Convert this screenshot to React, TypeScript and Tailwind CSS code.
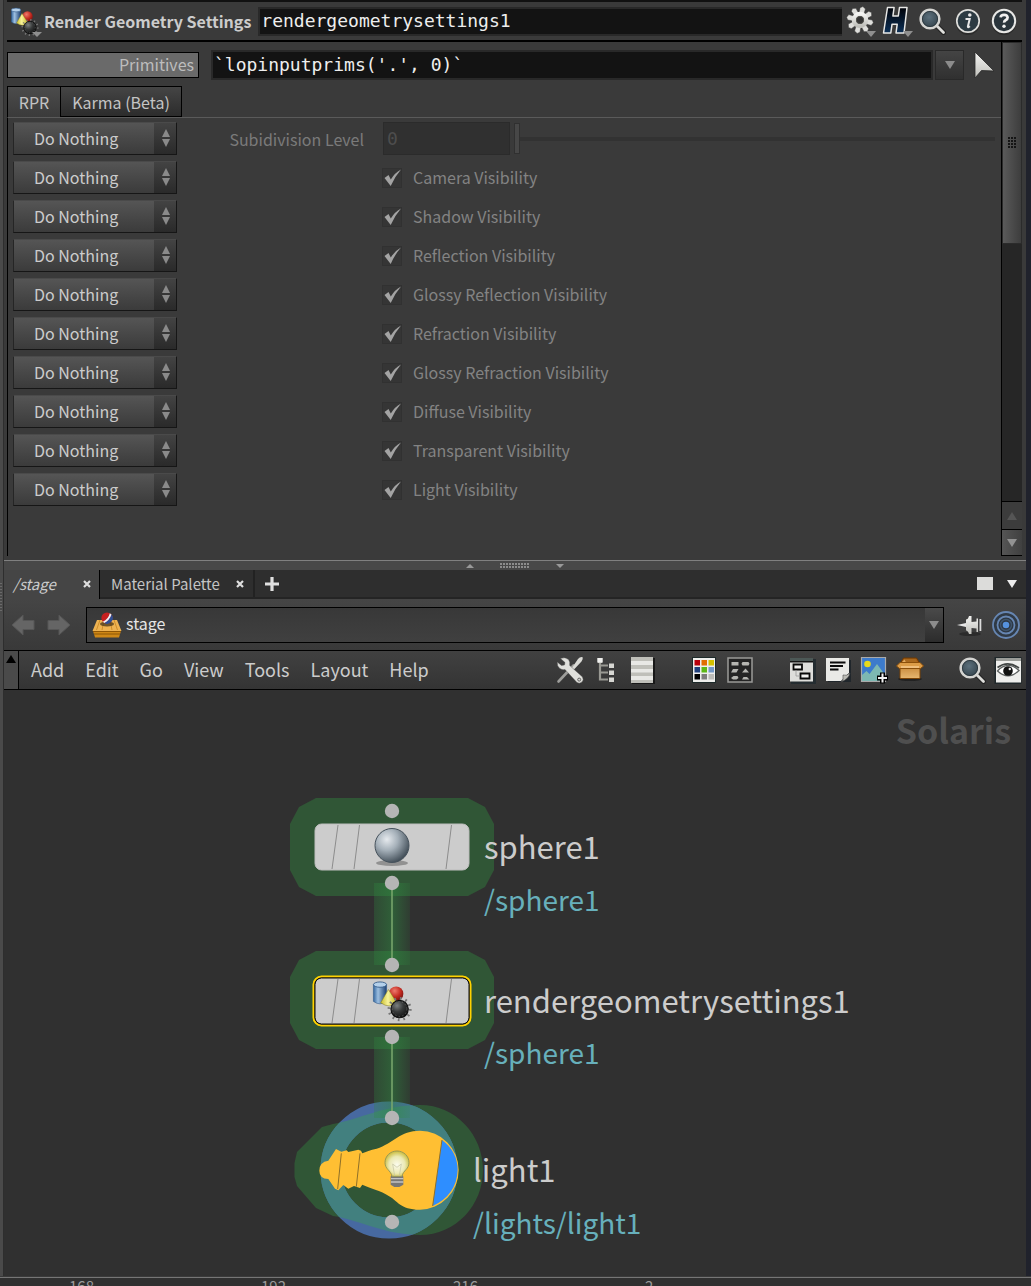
import React, { useState } from "react";

type IconProps = { className?: string };

const sans = "font-['Noto_Sans_CJK_SC','Noto_Sans',sans-serif]";
const mono = "font-['DejaVu_Sans_Mono',monospace]";

function Defs() {
  return (
    <svg width="0" height="0" className="absolute" aria-hidden="true">
      <defs>
        <linearGradient id="blueCyl" x1="0" x2="1" y1="0" y2="0">
          <stop offset="0" stopColor="#33669f" />
          <stop offset="0.35" stopColor="#9dbfe0" />
          <stop offset="1" stopColor="#1c3f70" />
        </linearGradient>
        <radialGradient id="redBall" cx="0.4" cy="0.3" r="0.7">
          <stop offset="0" stopColor="#ee7a6c" />
          <stop offset="0.6" stopColor="#c32a20" />
          <stop offset="1" stopColor="#7d1410" />
        </radialGradient>
        <linearGradient id="yellowCone" x1="0" x2="1" y1="0" y2="0">
          <stop offset="0" stopColor="#c9bd2c" />
          <stop offset="0.45" stopColor="#f8f39a" />
          <stop offset="1" stopColor="#c4b21d" />
        </linearGradient>
        <radialGradient id="darkBall" cx="0.35" cy="0.3" r="0.7">
          <stop offset="0" stopColor="#7c8080" />
          <stop offset="0.5" stopColor="#383a3a" />
          <stop offset="1" stopColor="#151515" />
        </radialGradient>
        <radialGradient id="glass" cx="0.45" cy="0.4" r="0.6">
          <stop offset="0" stopColor="#5c707c" />
          <stop offset="1" stopColor="#33424b" />
        </radialGradient>
        <linearGradient id="navyH" x1="0" x2="0" y1="0" y2="1">
          <stop offset="0" stopColor="#000208" />
          <stop offset="1" stopColor="#0d3158" />
        </linearGradient>
        <linearGradient id="silver" x1="0" x2="0" y1="0" y2="1">
          <stop offset="0" stopColor="#f4f4f2" />
          <stop offset="1" stopColor="#bfbfba" />
        </linearGradient>
        <linearGradient id="wood" x1="0" x2="0" y1="0" y2="1">
          <stop offset="0" stopColor="#c98b3c" />
          <stop offset="1" stopColor="#e7b771" />
        </linearGradient>
        <radialGradient id="steel" cx="0.35" cy="0.32" r="0.72">
          <stop offset="0" stopColor="#e6eaee" />
          <stop offset="0.45" stopColor="#a5b0b9" />
          <stop offset="1" stopColor="#414d57" />
        </radialGradient>
        <linearGradient id="wire" x1="0" x2="1" y1="0" y2="0">
          <stop offset="0" stopColor="#2f8a40" stopOpacity="0.28" />
          <stop offset="0.5" stopColor="#2f8a40" stopOpacity="0.52" />
          <stop offset="1" stopColor="#2f8a40" stopOpacity="0.14" />
        </linearGradient>
        <radialGradient id="bulbGlass" cx="0.5" cy="0.55" r="0.55">
          <stop offset="0" stopColor="#fbfbee" />
          <stop offset="0.6" stopColor="#ebe9b4" />
          <stop offset="1" stopColor="#c9bb3a" />
        </radialGradient>
        <clipPath id="lightHaloClip">
          <path d={lightHalo} />
        </clipPath>
      </defs>
    </svg>
  );
}

const lightHalo =
  "M294.500 1163 297 1152 322 1127 333 1124C360 1119 385 1105 420 1105C456 1105 483 1135 483 1170S456 1235 420 1235C385 1235 360 1220 333 1216L316 1208 297 1186 294.500 1177z";

function GeometryShapes() {
  return (
    <g>
      <path d="M.3 4v12q4.700 3.500 9.400 0V4z" fill="url(#blueCyl)" stroke="#2d5686" strokeWidth="0.400" />
      <ellipse cx="5" cy="4" rx="4.700" ry="1.900" fill="#b4d0ea" stroke="#2d5686" strokeWidth="0.600" />
      <circle cx="16.500" cy="10.500" r="5.200" fill="url(#redBall)" />
      <path d="M11 7.500 17 17q-5 4.500-11.500 0z" fill="url(#yellowCone)" stroke="#8b8120" strokeWidth="0.400" />
      <circle cx="19" cy="21.500" r="7.600" fill="none" stroke="#777" strokeWidth="2" strokeDasharray="1.200 2.780" />
      <circle cx="19" cy="21.500" r="6.200" fill="url(#darkBall)" stroke="#0e0e0e" strokeWidth="0.800" />
      <circle cx="19" cy="21.500" r="5.200" fill="none" stroke="#707070" strokeWidth="0.500" strokeDasharray="1 1.600" />
    </g>
  );
}

function GeometryIcon({ className }: IconProps) {
  return (
    <svg viewBox="0 0 32 32" width="32" height="32" className={className}>
      <g transform="translate(0 1)"><GeometryShapes /></g>
      <path d="M21 27h10l-5 5z" fill="#8f8f8f" />
    </svg>
  );
}

function GearIcon() {
  const teeth = [0, 45, 90, 135, 180, 225, 270, 315];
  return (
    <svg viewBox="0 0 32 32" width="32" height="32">
      {teeth.map((a) => (
        <path key={a} d="M11.700 9 11.500 3 14 1.300 17 3 16.500 9z" transform={`rotate(${a + 12} 14 15)`} fill="#dededb" stroke="#2c2c2c" strokeWidth="0.400" />
      ))}
      <circle cx="14" cy="15" r="6" fill="none" stroke="url(#silver)" strokeWidth="4.600" />
      <circle cx="14" cy="15" r="3.700" fill="#333" stroke="#55554f" strokeWidth="0.800" />
      <path d="M20 26h10l-5 6z" fill="#8f8f8f" />
    </svg>
  );
}

function HoudiniIcon() {
  return (
    <svg viewBox="0 0 32 32" width="32" height="32">
      <path
        d="M5.500 2.500h6.600L10.900 11h5.400L17.500 2.500H25L22 28h-8l1.200-8.700H10L8.800 28H1.500z"
        fill="url(#navyH)"
        stroke="#e8e8e6"
        strokeWidth="1.500"
        strokeLinejoin="round"
      />
      <path d="M21 26h10l-5 6z" fill="#8f8f8f" />
    </svg>
  );
}

function SearchIcon() {
  return (
    <svg viewBox="0 0 28 28" width="28" height="28">
      <path d="m17.500 17.500 8 8" stroke="#222" strokeWidth="5" strokeLinecap="round" />
      <path d="m17.500 17.500 8 8" stroke="#dededb" strokeWidth="2.800" strokeLinecap="round" />
      <circle cx="12" cy="12" r="9.300" fill="url(#glass)" stroke="#d5d5d2" strokeWidth="2.600" />
      <circle cx="12" cy="12" r="7.600" fill="none" stroke="#28343a" strokeWidth="0.800" />
    </svg>
  );
}

function InfoIcon() {
  return (
    <svg viewBox="0 0 28 28" width="28" height="28">
      <ellipse cx="14" cy="16" rx="12" ry="12" fill="#222" opacity="0.600" />
      <circle cx="14" cy="14" r="11.200" fill="#2c3a42" stroke="#dededb" strokeWidth="1.700" />
      <path d="M11.500 12h4.200l-1.800 7.500q-.2 1.500 2-.3" fill="none" stroke="#e8e8e8" strokeWidth="2" />
      <circle cx="15.800" cy="8" r="1.800" fill="#e8e8e8" />
    </svg>
  );
}

function HelpIcon() {
  return (
    <svg viewBox="0 0 28 28" width="28" height="28">
      <ellipse cx="14" cy="16" rx="12" ry="12" fill="#222" opacity="0.600" />
      <circle cx="14" cy="14" r="11.200" fill="#2a353c" stroke="#e8e8e6" strokeWidth="2" />
      <path d="M10.600 10.300q.3-2.500 3.500-2.500t3.500 2.600q0 1.600-1.800 2.600t-1.700 2.600" fill="none" stroke="#f0f0f0" strokeWidth="2.700" />
      <circle cx="14" cy="19.300" r="1.700" fill="#f0f0f0" />
    </svg>
  );
}

function StageIcon() {
  return (
    <svg viewBox="0 0 30 26" width="30" height="26">
      <path d="M5 8h20l4.500 11h-29z" fill="#eeb352" />
      <path d="M8 8 4.500 18M12 8l-2 10M18 8l2 10M22 8l3.500 10" stroke="#c98925" strokeWidth="0.900" />
      <path d="M1 19h28l-2 6.500H3z" fill="#cf8816" />
      <path d="M1 19.500h28M2 22h26" stroke="#8e5605" strokeWidth="1" />
      <ellipse cx="15" cy="12" rx="7" ry="2.500" fill="#3b2c15" opacity="0.700" />
      <circle cx="15" cy="6" r="5.600" fill="#c62020" />
      <path d="M19.500 2.600A5.600 5.600 0 0 1 12.200 10.900Q17.500 8.500 19.500 2.600z" fill="#2d4f93" />
      <path d="M17.800 1.200 19.500 2.600Q17.500 8.500 12.200 10.900L10.800 9.700Q16.500 7 17.800 1.200z" fill="#eef1f6" />
    </svg>
  );
}

function ArrowIcon({ flip = false }: { flip?: boolean }) {
  return (
    <svg viewBox="0 0 28 28" width="28" height="28" className={flip ? "-scale-x-100" : ""}>
      <path d="M2 14 13 4v5.500h11v9H13V24z" fill="#656565" stroke="#565656" />
    </svg>
  );
}

function PinIcon() {
  return (
    <svg viewBox="0 0 28 24" width="28" height="24">
      <ellipse cx="14" cy="21" rx="11" ry="2" fill="#2b2b2b" />
      <path d="M1 12 10 10v4z" fill="#e6e6e6" />
      <path d="M10 6.500q2 0 3-3.500h2.500v6l5-.5V5.500H22V19h-1.500v-3.500l-5-.5v6H13Q12 17.500 10 17.500z" fill="url(#silver)" />
      <path d="M23.500 6h1.800v12h-1.800z" fill="#dcdcdc" />
    </svg>
  );
}

function TargetIcon() {
  return (
    <svg viewBox="0 0 30 30" width="30" height="30">
      <circle cx="15" cy="15" r="13" fill="#303a45" stroke="#6686b2" strokeWidth="1.800" />
      <circle cx="15" cy="15" r="8.500" fill="#2d3742" stroke="#6686b2" strokeWidth="1.800" />
      <circle cx="15" cy="15" r="5.500" fill="none" stroke="#3f556d" strokeWidth="1.500" />
      <circle cx="15" cy="15" r="3.300" fill="#5592de" />
    </svg>
  );
}

function ToolsIcon() {
  return (
    <svg viewBox="0 0 28 28" width="28" height="28">
      <path d="m2.500 25.500 15-16" stroke="#9d9d9a" strokeWidth="2.600" strokeLinecap="round" />
      <path d="M15.500 12.500 22 3q2-2.500 4.500-2 1 2.500-1 4.500L17.500 14z" fill="#dadad6" />
      <path d="M4.500 2.500 9 6.500 8.500 9 5.500 9.500 1.200 6Q1 10 3.500 12.300q2.500 2 5.500 1.200l12 13q2.800 1.500 5-.5 2-2.500.5-5l-12.800-11.500Q14.500 6 12.500 3.500 9 .5 4.500 2.500z" fill="#e0e0dc" stroke="#4b4b4b" strokeWidth="0.400" />
      <circle cx="23.200" cy="23.600" r="1.500" fill="#d6d6d3" stroke="#555" strokeWidth="0.900" />
    </svg>
  );
}

function TreeIcon() {
  return (
    <svg viewBox="0 0 28 28" width="28" height="28">
      <path d="M8 6v17.500h8M8 9.500h8M8 16.500h8" fill="none" stroke="#999993" strokeWidth="2.200" />
      <path d="M5.500 2h5v5h-5zM17 7.500h5v4.500h-5zM17 14.500h5V19h-5zM17 21.500h5V26h-5z" fill="#d6d6d2" />
      <path d="M5.500 2h5v4h-5z" fill="#f0f0ee" />
    </svg>
  );
}

function ListIcon() {
  return (
    <svg viewBox="0 0 28 28" width="28" height="28">
      <path d="M4 2h23v26H4z" fill="#181818" />
      <path d="M3 1h22v26H3z" fill="#bfbfb9" />
      <path d="M3 5h22v4H3zM3 13h22v3.500H3zM3 20h22v4H3z" fill="#e8e8e5" />
    </svg>
  );
}

function PaletteIcon() {
  const colors = ["#b8000c", "#e06e00", "#d3c100", "#1f3f7c", "#5db814", "#7398c6", "#000000", "#7e7e7c", "#bcbcb8"];
  return (
    <svg viewBox="0 0 28 28" width="28" height="28">
      <path d="M2 1h24v26H2z" fill="#1d2a2a" />
      <path d="M3 2h22v24H3z" fill="#eeeeec" />
      {colors.map((c, i) => (
        <rect key={c} x={4.5 + (i % 3) * 7} y={4 + Math.floor(i / 3) * 7} width="5.500" height="5.500" fill={c} />
      ))}
    </svg>
  );
}

function ShapesIcon() {
  return (
    <svg viewBox="0 0 28 28" width="28" height="28">
      <path d="M2 2h24v24H2z" fill="#242424" stroke="#9a9a98" strokeWidth="1.500" />
      <path d="M5.500 6h7v3.500h-7zM16.500 6h6l1 1.800-1 1.700h-6l-1-1.700zM7 13h5.500l-2 3.500H5zM16 16.500l3.500-4 3.500 4zM7.500 20h4l1 2-2 1.500H7L5 22zM16 23.500l1.500-2.500h3.500l2.500 2.500z" fill="#b5b5b1" />
    </svg>
  );
}

function PanesIcon() {
  return (
    <svg viewBox="0 0 28 28" width="28" height="28">
      <path d="M3 3h25v25H3z" fill="#242c30" />
      <path d="M2 2h23v23.500H2z" fill="#dededb" />
      <path d="M2 2h23v3H2z" fill="#4c5856" />
      <path d="M2 5h23v1.500H2z" fill="#141414" />
      <path d="M5.500 8.500H14v5H5.500zM12.500 17.500h9v5h-9z" fill="#f0f0ee" stroke="#080808" strokeWidth="1.800" />
      <path d="M8 14v6h4" fill="none" stroke="#999" strokeWidth="0.800" />
    </svg>
  );
}

function NoteIcon() {
  return (
    <svg viewBox="0 0 28 28" width="28" height="28">
      <path d="M4 4h23v22H4z" fill="#20262b" />
      <path d="M2 2h23v15l-8 8H2z" fill="#e9e9e6" />
      <path d="M17 26q3-2 2-7 3 1.500 7-2-1 6-9 9z" fill="#b9b9b3" stroke="#454545" strokeWidth="0.600" />
      <path d="M6 6.500h15.500M6 10h13M6 13.500h8.500" stroke="#0b0b0b" strokeWidth="1.800" />
    </svg>
  );
}

function ImageIcon() {
  return (
    <svg viewBox="0 0 28 28" width="28" height="28">
      <path d="M1.500 1.500h24v24h-24z" fill="#3d7bcb" stroke="#aaaaaa" strokeWidth="1.200" />
      <circle cx="7.500" cy="8" r="3.300" fill="#e8d919" />
      <path d="M2 19l4.500-4 3 3L17 8l8 11v6H2z" fill="#7db8b2" />
      <path d="M22.500 16.500v11M17 22h11" stroke="#000" strokeWidth="5" />
      <path d="M22.500 17.500v9M18 22h9" stroke="#f2f2f2" strokeWidth="2" />
    </svg>
  );
}

function BoxIcon() {
  return (
    <svg viewBox="0 0 28 28" width="28" height="28">
      <ellipse cx="14" cy="23" rx="12" ry="2" fill="#222" />
      <path d="M4 11h20v11.500H4z" fill="url(#wood)" stroke="#7b4305" />
      <path d="M7.500 2h13l4 6.500h-21z" fill="#a85e12" stroke="#6d3a05" />
      <path d="M8.500 3h11l2 3.500h-15z" fill="#a9691f" />
      <path d="M10 6.500 8.500 3.500 6 6z" fill="#e0aa60" />
      <path d="M4 6.500h20l3.500 3.500-3 2.500h-21L.5 10z" fill="#dd9d48" stroke="#8b4f0a" />
      <path d="M5 10h18v2H5z" fill="#efbe7c" />
    </svg>
  );
}

function EyeIcon() {
  return (
    <svg viewBox="0 0 28 28" width="28" height="28">
      <path d="M.5 1h27v27H.5z" fill="#20282b" />
      <path d="M2 2h25v24.500H2z" fill="#eeeeec" />
      <path d="M2 2h25v3H2z" fill="#9a9c98" />
      <path d="M3.500 15q10-11 21.500-.5Q14.500 25 3.500 15z" fill="#fff" stroke="#5d6160" strokeWidth="1.300" />
      <path d="M3.500 11.500Q14 4 25 12" fill="none" stroke="#404443" strokeWidth="1.600" />
      <circle cx="14" cy="15" r="4.800" fill="#111" />
      <circle cx="15.800" cy="13" r="1.200" fill="#eee" />
    </svg>
  );
}

function TriangleDown({ className }: IconProps) {
  return (
    <svg viewBox="0 0 10 8" width="10" height="8" className={className}>
      <path d="M0 0h10L5 8z" fill="currentColor" />
    </svg>
  );
}

const iconButton = "flex shrink-0 items-center justify-center";

function Header() {
  return (
    <header className="flex h-[40px] items-center border-t-2 border-[#111] pr-1 pl-1">
      <button aria-label="Node type" className={iconButton}>
        <GeometryIcon />
      </button>
      <label htmlFor="node-name" className="ml-px shrink-0 text-base leading-6 font-bold text-[#cccccc]">
        Render Geometry Settings
      </label>
      <input
        id="node-name"
        defaultValue="rendergeometrysettings1"
        className={`${mono} ml-[7px] h-[29px] min-w-0 flex-1 border-2 border-r-0 border-[#292929] bg-[#131313] pb-0.5 pl-px text-lg leading-6 text-[#eeeeee] outline-none`}
      />
      <div className="ml-1 flex shrink-0 items-center gap-1">
        <button aria-label="Settings" className={iconButton}><GearIcon /></button>
        <button aria-label="Houdini" className={iconButton}><HoudiniIcon /></button>
        <div className="flex gap-2">
          <button aria-label="Search parameters" className={iconButton}><SearchIcon /></button>
          <button aria-label="Info" className={iconButton}><InfoIcon /></button>
          <button aria-label="Help" className={iconButton}><HelpIcon /></button>
        </div>
      </div>
    </header>
  );
}

function PrimitivesRow() {
  return (
    <div className="flex h-[30px] items-center">
      <label htmlFor="primitives" className="flex h-[26px] w-[192px] shrink-0 items-center justify-end border border-black bg-[#6a6a6a] pr-1 pb-0.5 text-base text-[#bdbdbd]">
        Primitives
      </label>
      <input
        id="primitives"
        defaultValue="`lopinputprims('.', 0)`"
        className={`${mono} ml-3 h-[30px] min-w-0 flex-1 border-2 border-[#292929] bg-[#131313] pb-0.5 pl-px text-lg leading-6 text-[#eeeeee] outline-none`}
      />
      <button aria-label="Primitive patterns" className="ml-0.5 flex h-[30px] w-[29px] items-center justify-center border border-[#292929] bg-linear-to-b from-[#444] to-[#303030] text-[#8c8c8c]">
        <TriangleDown />
      </button>
      <button aria-label="Select primitives" className="mr-1.5 ml-2.5">
        <svg viewBox="0 0 21 28" width="21" height="28">
          <path d="M1 1v26l6.500-7.500L20 20z" fill="url(#silver)" stroke="#282828" strokeWidth="0.800" />
        </svg>
      </button>
    </div>
  );
}

function ActionSelect({ name }: { name: string }) {
  return (
    <div className="relative h-[33px] w-[164px] shrink-0">
      <select
        aria-label={`${name} action`}
        className="h-full w-full appearance-none border border-t-[#4a4a4a] border-r-[#161616] border-b-[#161616] border-l-[#252525] bg-linear-to-b from-[#555] to-[#3b3b3b] pb-0.5 pl-5 text-base leading-6 text-[#cccccc] outline-none"
      >
        <option>Do Nothing</option>
        <option>Set or Create</option>
      </select>
      <span className="pointer-events-none absolute inset-y-px right-px flex w-[22px] items-center justify-center bg-linear-to-b from-[#434343] to-[#2a2a2a] pb-px pl-0.5">
        <svg viewBox="0 0 10 18" width="10" height="18">
          <path d="M1 8h8L5 0zM1 10h8l-4 8z" fill="#8a8a8a" />
        </svg>
      </span>
    </div>
  );
}

const toggles = [
  "Camera Visibility",
  "Shadow Visibility",
  "Reflection Visibility",
  "Glossy Reflection Visibility",
  "Refraction Visibility",
  "Glossy Refraction Visibility",
  "Diffuse Visibility",
  "Transparent Visibility",
  "Light Visibility",
];

function ToggleRow({ name }: { name: string }) {
  return (
    <div className="flex items-center">
      <ActionSelect name={name} />
      <label className="ml-[205px] flex items-center gap-[11px] text-base leading-6 text-[#838383]">
        <span className="relative flex size-5">
          <input type="checkbox" defaultChecked disabled className="peer size-5 appearance-none border border-[#313131] bg-[#353535]" />
          <svg viewBox="0 0 20 20" width="20" height="20" className="pointer-events-none absolute inset-0 hidden peer-checked:block">
            <path d="M2.500 10 6.500 7 8.800 11.500Q12.500 5 19 1.500 12.500 9 8.700 18z" fill="#a3a3a3" />
          </svg>
        </span>
        <span className="pb-0.5">{name}</span>
      </label>
    </div>
  );
}

function ParameterPanel() {
  return (
    <section className="flex border-t-2 border-black">
      <div className="flex min-w-0 flex-1 flex-col pt-2">
        <PrimitivesRow />
        <div className="mt-1.5 flex" role="tablist">
          <button role="tab" aria-selected="true" className="h-[31px] w-[54px] border border-b-0 border-black bg-linear-to-b from-[#4c4c4c] to-[#3a3a3a] text-base text-[#c4c4c4]">
            RPR
          </button>
          <button role="tab" aria-selected="false" className="h-[31px] w-[121px] border border-l-0 border-black bg-linear-to-b from-[#454545] to-[#2c2c2c] text-base text-[#c4c4c4]">
            Karma (Beta)
          </button>
        </div>
        <div className="flex h-[439px] flex-col gap-1.5 border-t border-l border-t-[#5a5a5a] border-l-black pt-1 pl-[5px]">
          <div className="flex items-center">
            <ActionSelect name="Subidivision Level" />
            <label htmlFor="subdivision" className="w-[187px] shrink-0 text-right text-base leading-6 text-[#7a7a7a]">
              Subidivision Level
            </label>
            <input id="subdivision" defaultValue="0" disabled className={`${mono} ml-[19px] h-[33px] w-[127px] border border-[#2b2b2b] bg-[#303030] pl-[3px] text-lg text-[#4d4d4d]`} />
            <input
              type="range"
              aria-label="Subidivision Level slider"
              min="0"
              max="7"
              defaultValue="0"
              disabled
              className="mr-1.5 ml-1 h-[33px] min-w-0 flex-1 appearance-none bg-transparent bg-[linear-gradient(#323232,#323232)] bg-size-[100%_4px] bg-center bg-no-repeat [&::-webkit-slider-thumb]:h-[31px] [&::-webkit-slider-thumb]:w-1.5 [&::-webkit-slider-thumb]:appearance-none [&::-webkit-slider-thumb]:border [&::-webkit-slider-thumb]:border-[#303030] [&::-webkit-slider-thumb]:bg-[#474747]"
            />
          </div>
          {toggles.map((t) => (
            <ToggleRow key={t} name={t} />
          ))}
        </div>
      </div>
      <div className="flex w-[21px] flex-col border-b border-l border-black bg-[#262626]">
        <div className="flex h-[202px] items-center justify-center border border-[#2b2b2b] bg-linear-to-r from-[#5a5a5a] to-[#3d3d3d]">
          <svg viewBox="0 0 9 12" width="9" height="12">
            <path d="M1 0v12M4 0v12M7 0v12" stroke="#151515" strokeWidth="2" strokeDasharray="2 1" />
          </svg>
        </div>
        <div className="flex-1" />
        <button aria-label="Scroll up" className="flex h-[28px] items-center justify-center border-t border-black bg-[#3c3c3c] text-[#555]">
          <TriangleDown className="rotate-180" />
        </button>
        <button aria-label="Scroll down" className="flex h-[26px] items-center justify-center border-t border-black bg-linear-to-r from-[#555] to-[#404040] text-[#929292]">
          <TriangleDown />
        </button>
      </div>
    </section>
  );
}

function Splitter() {
  return (
    <div className="mt-1 flex h-[10px] items-center justify-center gap-[26px] border-t border-[#808080] bg-[#484848]">
      <svg viewBox="0 0 8 4" width="8" height="4"><path d="M0 4h8L4 0z" fill="#999" /></svg>
      <svg viewBox="0 0 30 6" width="30" height="6">
        <path d="M0 1h30M0 4h30" stroke="#8c8c8c" strokeWidth="2" strokeDasharray="2 1" />
      </svg>
      <svg viewBox="0 0 8 4" width="8" height="4"><path d="M0 0h8L4 4z" fill="#999" /></svg>
    </div>
  );
}

function CloseGlyph() {
  return (
    <svg viewBox="0 0 8 8" width="8" height="8">
      <path d="m1 1 6 6M7 1 1 7" stroke="#dedede" strokeWidth="2.200" />
    </svg>
  );
}

function PaneTabs() {
  return (
    <div className="flex h-[29px] items-center border-b-2 border-[#242424] bg-[#2e2e2e]">
      <div className="-mb-0.5 flex h-[29px] w-[96px] items-center justify-between border-r border-black bg-[#454545] pr-2 pb-0.5 pl-[9px]">
        <button className="text-[15px] leading-5 text-[#cccccc] italic">/stage</button>
        <button aria-label="Close /stage"><CloseGlyph /></button>
      </div>
      <div className="flex h-full w-[155px] items-center justify-between border-r-2 border-[#222] pr-[9px] pl-[11px]">
        <button className="text-[15px] leading-5 whitespace-nowrap text-[#c4c4c4]">Material Palette</button>
        <button aria-label="Close Material Palette"><CloseGlyph /></button>
      </div>
      <button aria-label="New tab" className="ml-[9px]">
        <svg viewBox="0 0 16 16" width="16" height="16"><path d="M8 1v14M1 8h14" stroke="#e0e0e0" strokeWidth="3.200" /></svg>
      </button>
      <div className="flex-1" />
      <button aria-label="Maximize pane" className="h-[13px] w-4 bg-[#dcdcda]" />
      <button aria-label="Pane menu" className="mr-[9px] ml-3.5 text-[#ececec]"><TriangleDown /></button>
    </div>
  );
}

function PathBar() {
  return (
    <div className="flex h-[51px] items-center bg-linear-to-b from-[#454545] to-[#393939] pl-1.5">
      <button aria-label="Back"><ArrowIcon /></button>
      <button aria-label="Forward" className="ml-1.5"><ArrowIcon flip /></button>
      <div className="ml-3.5 flex h-[36px] min-w-0 flex-1 items-center border border-black bg-linear-to-b from-[#383838] to-[#404040] pl-[5px]">
        <StageIcon />
        <input aria-label="Network path" defaultValue="stage" className="ml-1 min-w-0 flex-1 bg-transparent pb-1 text-base leading-6 text-[#e6e6e6] outline-none" />
        <button aria-label="Path history" className="flex h-full w-[18px] items-center justify-center bg-linear-to-b from-[#4a4a4a] to-[#2c2c2c] text-[#8c8c8c]">
          <TriangleDown />
        </button>
      </div>
      <button aria-label="Pin" className="ml-3"><PinIcon /></button>
      <button aria-label="Follow selection" className="mr-[5px] ml-[7px]"><TargetIcon /></button>
    </div>
  );
}

function NetworkMenu() {
  const menus = ["Add", "Edit", "Go", "View", "Tools", "Layout", "Help"];
  const groups = [
    [["Tools", ToolsIcon], ["Tree view", TreeIcon], ["List view", ListIcon]],
    [["Color palette", PaletteIcon], ["Shape palette", ShapesIcon]],
    [["Network box", PanesIcon], ["Sticky note", NoteIcon], ["Background image", ImageIcon], ["Assets", BoxIcon]],
    [["Find", SearchIcon], ["Display options", EyeIcon]],
  ] as [string, () => React.JSX.Element][][];
  return (
    <div className="flex h-[40px] items-center border-y border-black bg-linear-to-b from-[#414141] to-[#343434]">
      <button aria-label="Collapse" className="flex h-full w-[15px] justify-center border-r border-black bg-[#4a4a4a] pt-1 text-black">
        <TriangleDown className="rotate-180" />
      </button>
      <nav className="ml-3 flex gap-[21px] pb-0.5 text-lg leading-6 text-[#cccccc]">
        {menus.map((m) => (
          <button key={m}>{m}</button>
        ))}
      </nav>
      <div className="flex-1" />
      <div className="flex gap-[34px] pr-1">
        {groups.map((g) => (
          <div key={g[0][0]} className="flex gap-2">
            {g.map(([name, Icon]) => (
              <button key={name} aria-label={name} className={iconButton}><Icon /></button>
            ))}
          </div>
        ))}
      </div>
    </div>
  );
}

function NodeBody({ y, selected = false }: { y: number; selected?: boolean }) {
  return (
    <g>
      {selected && <rect x="313.500" y={y - 1.5} width="157" height="49" rx="8" fill="#111" stroke="#ffd200" strokeWidth="2" />}
      <rect x="315" y={y} width="154" height="46" rx="6.500" fill="#cccccc" stroke={selected ? "#0c0c0c" : "#bdbdbd"} />
      <path d={`M338 ${y + 1}l-6 44M359.500 ${y + 1}l-5.500 44M451.500 ${y + 1}l-5.500 44`} stroke="#8c8c8c" fill="none" />
    </g>
  );
}

const halo = "M316 0H468L485 9 494 26V72L485 89 468 98H316L299 89 290 72V26L299 9z";

const nodeLabel = "absolute whitespace-nowrap text-[31px] leading-10 text-[#cccccc]";
const pathLabel = "absolute whitespace-nowrap text-[28px] leading-10 text-[#67b0bc]";

function NetworkCanvas() {
  const connectors = [811, 883, 965, 1037, 1118, 1222];
  return (
    <main className="relative min-h-[586px] flex-1 overflow-hidden bg-[#303030]">
      <svg viewBox="4 690 680 586" width="680" height="586" className="absolute top-0 left-0">
        <path d={halo} transform="translate(0 798)" fill="#305636" />
        <path d={halo} transform="translate(0 951)" fill="#305636" />
        <path d={lightHalo} fill="#305636" />
        <circle cx="389" cy="1170" r="58" fill="none" stroke="#4769a0" strokeWidth="21" />
        <circle cx="389" cy="1170" r="58" fill="none" stroke="#42807f" strokeWidth="21" clipPath="url(#lightHaloClip)" />
        <path d="M374 883h36v82h-36zM374 1037h36v81h-36z" fill="url(#wire)" />
        <path d="M392 883v82M392 1037v81" stroke="#7ba86d" strokeWidth="1.500" />
        <NodeBody y={824} />
        <ellipse cx="392" cy="863" rx="16" ry="3" fill="#777" opacity="0.700" />
        <circle cx="392" cy="845.500" r="17" fill="url(#steel)" stroke="#46525c" />
        <NodeBody y={978} selected />
        <g transform="translate(373 979) scale(1.400)"><GeometryShapes /></g>
        <g transform="translate(280 1080) scale(.3333)">
          <path
            d="M118 272Q118 246 145 242L168 207 184 215 200 211 205 216 235 209 243 212 247 220Q262 212 290 206C340 190 360 152 420 152A118 118 0 0 1 536 270 118 118 0 0 1 420 389C360 389 350 360 330 350 300 330 270 325 247 314L240 324 222 318 205 326 190 315 175 331 165 326 145 297Q118 296 118 272Z"
            fill="#ffbf33"
          />
          <path d="M486 180Q533 215 533 270 530 345 458 378Z" fill="#2e8eff" />
          <path d="M184 220 173 327M240 220 229 320M486 180 458 378" stroke="#8f6f28" strokeWidth="3" />
          <path d="M337 280h29l4 10v24l-12 7h-15l-11-7v-24z" fill="#767676" />
          <path d="M333 296h37M333 306h37" stroke="#c2c2c2" strokeWidth="4" />
          <path d="M351 213C331 213 315 228 315 248 315 268 332 270 336 289H366C370 270 387 268 387 248 387 228 371 213 351 213Z" fill="url(#bulbGlass)" stroke="#9a9a55" strokeWidth="3" />
          <path d="M344 288l-6-36 13 10 13-10-6 36" fill="none" stroke="#c3c3a0" strokeWidth="2" />
        </g>
        {connectors.map((y) => (
          <circle key={y} cx="392" cy={y} r="7.200" fill="#b5b5b5" />
        ))}
      </svg>
      <span className="absolute top-[18px] right-[15px] text-[34px] leading-11 font-bold text-[#4f4f4f]">Solaris</span>
      <span className={`${nodeLabel} top-[136px] left-[480px]`}>sphere1</span>
      <span className={`${pathLabel} top-[189px] left-[480px]`}>/sphere1</span>
      <span className={`${nodeLabel} top-[290px] left-[480px]`}>rendergeometrysettings1</span>
      <span className={`${pathLabel} top-[342px] left-[480px]`}>/sphere1</span>
      <span className={`${nodeLabel} top-[459px] left-[469px]`}>light1</span>
      <span className={`${pathLabel} top-[512px] left-[469px]`}>/lights/light1</span>
    </main>
  );
}

export default function App() {
  const [ticks] = useState(["168", "192", "216", "2"]);
  return (
    <div className={`${sans} flex min-h-screen flex-col bg-[#3a3a3a] text-base leading-6`}>
      <Defs />
      <div className="flex flex-1">
        <div className="w-1 shrink-0 border-r border-[#2e2e2e] bg-[#4a4a4a] pt-[583px]">
          <svg viewBox="0 0 2 29" width="2" height="29"><path d="M1 0v29" stroke="#8a8a8a" strokeDasharray="1 2" /></svg>
        </div>
        <div className="flex min-w-0 flex-1 flex-col">
          <div className="pr-1 pl-[3px]">
            <Header />
            <ParameterPanel />
          </div>
          <Splitter />
          <PaneTabs />
          <PathBar />
          <NetworkMenu />
          <NetworkCanvas />
        </div>
        <div className="w-[5px] shrink-0 bg-[#20222c]" />
      </div>
      <footer className="mt-px flex h-[9px] overflow-hidden border-t border-[#757575] bg-[#303030] pl-[69px] text-[15px] leading-4 text-[#9a9a9a]">
        {ticks.map((t) => (
          <span key={t} className="w-[192px] shrink-0">{t}</span>
        ))}
      </footer>
    </div>
  );
}
